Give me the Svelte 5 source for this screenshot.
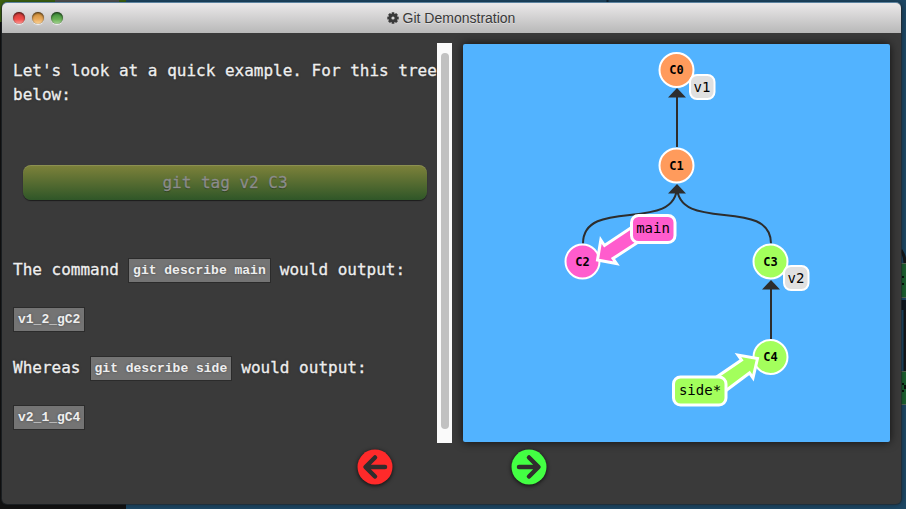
<script>
  const commits = [
    { id: 'C0', x: 213.5, y: 26, fill: '#ff9b5c' },
    { id: 'C1', x: 213.5, y: 121.5, fill: '#ff9b5c' },
    { id: 'C2', x: 119.5, y: 217.5, fill: '#ff5ccd' },
    { id: 'C3', x: 307.5, y: 217.5, fill: '#a3ff5c' },
    { id: 'C4', x: 307.5, y: 313, fill: '#a3ff5c' }
  ];
  const edges = [
    'M214 103 V50',
    'M120 199.5 C120 152 214 190 214 142',
    'M308 199.5 C308 152 214 190 214 142',
    'M308 295 V242'
  ];
  const heads = [
    { x: 214, y: 44 },
    { x: 214, y: 140 },
    { x: 308, y: 236 }
  ];
  const tags = [
    { name: 'v1', x: 227, y: 31 },
    { name: 'v2', x: 321, y: 222 }
  ];
</script>

<div class="desktop">
  <svg class="backdrop" width="906" height="509" viewBox="0 0 906 509">
    <rect width="906" height="509" fill="#1e4865" />
    <rect width="126" height="22" fill="#3e6410" />
    <rect x="55" width="64" height="5" fill="#535353" />
    <rect y="22" width="126" height="487" fill="#131313" />
    <path d="M607.5 0V3" stroke="#102331" stroke-width="2" />
    <path d="M901 250q4 6 4 13M905 308V372" fill="none" stroke="#151719" stroke-width="3" />
    <rect x="900" y="300" width="6" height="10" fill="#111820" />
    <g fill="#1c6030" stroke="#596956">
      <rect x="890" y="263.5" width="22" height="34" />
      <rect x="890" y="371.5" width="22" height="33" />
    </g>
    <path d="M902 277h2m-2 7h2M902 384h2m-2 7h2m1-6v4" stroke="#08120b" stroke-width="2" />
  </svg>

  <section class="window">
    <header>
      <div class="lights"><i class="red"></i><i class="amber"></i><i class="green"></i></div>
      <h1>
        <svg width="12" height="12" viewBox="-6 -6 12 12">
          <g fill="#393939">
            {#each [0, 45, 90, 135] as angle}
              <rect x="-1.4" y="-5.7" width="2.8" height="11.4" rx=".5" transform="rotate({angle})" />
            {/each}
            <circle r="4.3" />
          </g>
          <circle r="1.6" fill="#d3d3d3" />
        </svg>
        <span>Git Demonstration</span>
      </h1>
    </header>

    <main>
      <article>
        <div class="copy">
          <p class="intro">Let's look at a quick example. For this tree below:</p>
          <button class="command">git tag v2 C3</button>
          <p>The command <code>git describe main</code> would output:</p>
          <p class="result"><code>v1_2_gC2</code></p>
          <p>Whereas <code>git describe side</code> would output:</p>
          <p class="result"><code>v2_1_gC4</code></p>
        </div>
        <div class="scroll"><div class="thumb"></div></div>
      </article>

      <svg class="graph" width="427" height="398" viewBox="0 0 427 398">
        {#each edges as d}
          <path {d} fill="none" stroke="#2d2d2d" stroke-width="2" />
        {/each}
        {#each heads as h}
          <path d="M{h.x} {h.y}l-9 9.6h18z" fill="#2d2d2d" />
        {/each}
        {#each commits as c}
          <circle cx={c.x} cy={c.y} r="17" fill={c.fill} stroke="#fff" stroke-width="2" />
          <text class="commit" x={c.x} y={c.y + 4}>{c.id}</text>
        {/each}
        {#each tags as t}
          <rect x={t.x} y={t.y} width="24.5" height="24" rx="7" fill="#e0e0e0" stroke="#fff" stroke-width="2" />
          <text class="ref" x={t.x + 12} y={t.y + 17}>{t.name}</text>
        {/each}
        <g stroke="#fff" stroke-width="3">
          <path d="M134.5 216 137.8 196 141.5 201.5 170 182.5 180 195 150 214.5 153.5 219.5Z" fill="#ff5ccd" />
          <rect x="168.5" y="171.5" width="43.5" height="27" rx="7" fill="#ff5ccd" />
          <path d="M294.5 314.5 275 311 278.5 316 250 335.5 259 349.5 286.5 329 290 334Z" fill="#a3ff5c" />
          <rect x="210.5" y="333" width="52.5" height="28" rx="7" fill="#a3ff5c" />
        </g>
        <text class="ref" x="190" y="189">main</text>
        <text class="ref" x="237" y="351">side*</text>
      </svg>
    </main>

    <footer>
      <svg width="36" height="36" viewBox="-18 -18 36 36">
        <circle r="17.5" fill="#ff2a2a" />
        <path d="M10 0H-9M0-9.5-9.5 0 0 9.5" />
      </svg>
      <svg width="36" height="36" viewBox="-18 -18 36 36">
        <circle r="17.5" fill="#43ff43" />
        <path d="M-10 0H9M0-9.5 9.5 0 0 9.5" />
      </svg>
    </footer>
  </section>
</div>

<style>
  .desktop {
    position: relative;
    box-sizing: border-box;
    width: 906px;
    height: 509px;
    padding: 3px 4px 5px 2px;
    overflow: hidden;
    font: 16px/24px "DejaVu Sans Mono", monospace;
  }
  .backdrop { position: absolute; inset: 0; }
  .window {
    position: relative;
    box-sizing: border-box;
    height: 501px;
    width: 899px;
    border-radius: 5px;
    background: #3a3a3a;
    box-shadow: 0 0 0 1px rgba(35, 42, 47, .6), 0 0 6px rgba(0, 0, 0, .5);
  }
  header {
    position: relative;
    display: flex;
    align-items: center;
    height: 30px;
    border-radius: 5px 5px 0 0;
    background: linear-gradient(#ebe9ea, #b8b8b8);
    box-shadow: 0 -1px 0 #5c83a0;
  }
  .lights { display: flex; gap: 7px; width: 80px; padding-left: 11px; box-sizing: border-box; }
  .lights i {
    flex: none;
    width: 12px;
    height: 12px;
    border-radius: 50%;
    box-shadow: inset 0 1px 2px rgba(0, 0, 0, .75), 0 0 1px rgba(0, 0, 0, .5), 0 1px 1px #fff;
  }
  .red { background: linear-gradient(#d8403e 20%, #f04b48 60%, #ffa09c); }
  .amber { background: linear-gradient(#d4943f 20%, #e8aa5c 60%, #ffd69a); }
  .green { background: linear-gradient(#479640 20%, #68b055 60%, #abd898); }
  h1 {
    flex: 1;
    display: flex;
    align-items: center;
    justify-content: center;
    gap: 4px;
    margin: 0 81px 0 0;
    font: 14px/20px "Liberation Sans", Arial, sans-serif;
    color: #393939;
    text-shadow: 0 1px 0 rgba(255, 255, 255, .4);
  }
  main { display: flex; gap: 11px; padding: 10px 0 0 11px; height: 400px; }
  article { display: flex; width: 439px; height: 400px; }
  .copy {
    width: 424px;
    flex: none;
    color: #eee;
    text-shadow: 0 0 3px rgba(0, 0, 0, .35);
    white-space: nowrap;
    -webkit-text-stroke: .3px;
  }
  p { margin: 0 0 25px; height: 24px; }
  .intro { padding-top: 16px; height: 48px; margin-bottom: 58px; white-space: normal; width: 425px; }
  .command {
    display: block;
    width: 404px;
    height: 35px;
    margin: 0 10px 58px;
    padding: 0;
    border: 0;
    border-radius: 8px;
    background: linear-gradient(#7e823a, #2f5628);
    box-shadow: 0 1px 1px #1c1c1c, inset 0 1px 0 rgba(255, 255, 255, .12);
    color: #8c8c8c;
    font: inherit;
    text-shadow: 0 1px 1px rgba(0, 0, 0, .35);
    -webkit-text-stroke: .3px;
  }
  code {
    display: inline-block;
    box-sizing: border-box;
    height: 25px;
    margin: 0 -.5px;
    padding: 0 4px;
    border: 1px solid #2b2b2b;
    background: #747474;
    font: bold 13px/23px "Liberation Mono", "Courier New", monospace;
    vertical-align: 1px;
    -webkit-text-stroke: 0;
  }
  .result code { margin: 0; }
  .scroll { width: 15px; box-sizing: border-box; padding: 10px 3px 14px 4px; background: #fafafa; }
  .thumb { height: 376px; border-radius: 4px; background: #c1c1c1; }
  .graph {
    flex: none;
    margin-top: 1px;
    border-radius: 2px;
    background: #52b3ff;
    box-shadow: 0 0 10px rgba(0, 0, 0, .75);
  }
  text { text-anchor: middle; fill: #000; }
  .commit { font-size: 12px; font-weight: bold; }
  .ref { font-size: 14px; }
  footer { display: flex; gap: 118px; padding: 6px 0 0 355px; }
  footer svg { overflow: visible; filter: drop-shadow(0 1px 2px rgba(0, 0, 0, .8)); }
  footer path { fill: none; stroke: #302d2d; stroke-width: 4.5; stroke-linecap: round; stroke-linejoin: round; }
</style>
